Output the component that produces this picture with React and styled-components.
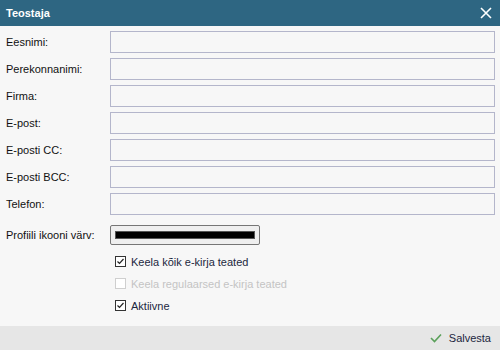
import React from 'react';
import styled, { createGlobalStyle } from 'styled-components';

const GlobalStyle = createGlobalStyle`
  html, body {
    margin: 0;
    padding: 0;
    background: #f7f7f7;
  }
  body {
    font-family: "Liberation Sans", Arial, sans-serif;
    font-size: 11px;
  }
`;

const Dialog = styled.div`
  width: 500px;
  height: 350px;
  display: flex;
  flex-direction: column;
  background: #f7f7f7;
  overflow: hidden;
`;

const Header = styled.div`
  height: 26px;
  flex: none;
  display: flex;
  align-items: center;
  justify-content: space-between;
  padding: 0 6px;
  background: #2e6682;
  color: #fff;
`;

const Title = styled.span`
  font-weight: 700;
  font-size: 11px;
`;

const Close = styled.button`
  border: 0;
  background: none;
  padding: 0;
  width: 16px;
  height: 16px;
  display: flex;
  align-items: center;
  justify-content: center;
  cursor: pointer;
`;

const Body = styled.div`
  flex: 1;
  padding: 5px 5px 0 6px;
`;

const Row = styled.div`
  display: grid;
  grid-template-columns: 104px 1fr;
  align-items: center;
  height: 22px;
  margin-bottom: 5px;
`;

const Label = styled.label`
  color: #111;
`;

const TextInput = styled.input`
  box-sizing: border-box;
  width: 385px;
  height: 22px;
  border: 1px solid #b4b6cb;
  background: #f7f7f7;
  font: inherit;
  padding: 0 4px;
  outline: none;
`;

const ColorRow = styled(Row)`
  margin-top: 10px;
  height: 20px;
`;

const ColorButton = styled.div`
  box-sizing: border-box;
  width: 150px;
  height: 20px;
  border: 1px solid #767676;
  border-radius: 2px;
  background: #efefef;
  padding: 5px 4px;
`;

const Swatch = styled.div`
  height: 100%;
  background: #000;
  border: 1px solid #555;
  box-sizing: border-box;
`;

const Checks = styled.div`
  display: flex;
  flex-direction: column;
  gap: 9px;
  padding: 5px 0 0 109px;
`;

const Check = styled.label`
  display: flex;
  align-items: center;
  gap: 5px;
  height: 13px;
  color: ${p => (p.disabled ? '#c4c4c4' : '#1c2740')};
`;

const Box = styled.span`
  box-sizing: border-box;
  width: 11px;
  height: 11px;
  border: 1px solid ${p => (p.disabled ? '#cfcfcf' : '#333')};
  background: #fff;
  display: flex;
  align-items: center;
  justify-content: center;
`;

const Footer = styled.div`
  height: 24px;
  flex: none;
  background: #e6e6e6;
  display: flex;
  align-items: center;
  justify-content: flex-end;
  padding-right: 9px;
`;

const SaveButton = styled.button`
  border: 0;
  background: none;
  font: inherit;
  color: #1c2740;
  display: flex;
  align-items: center;
  gap: 7px;
  padding: 0;
  cursor: pointer;
`;

const fields = ['Eesnimi:', 'Perekonnanimi:', 'Firma:', 'E-post:', 'E-posti CC:', 'E-posti BCC:', 'Telefon:'];

const checks = [
  { label: 'Keela kõik e-kirja teated', checked: true },
  { label: 'Keela regulaarsed e-kirja teated', disabled: true },
  { label: 'Aktiivne', checked: true },
];

export default function App() {
  return (
    <Dialog>
      <GlobalStyle />
      <Header>
        <Title>Teostaja</Title>
        <Close aria-label="Sulge">
          <svg width="12" height="12" viewBox="0 0 12 12">
            <path d="M1 1L11 11M11 1L1 11" stroke="#fff" strokeWidth="1.6" />
          </svg>
        </Close>
      </Header>
      <Body>
        {fields.map(f => (
          <Row key={f}>
            <Label>{f}</Label>
            <TextInput />
          </Row>
        ))}
        <ColorRow>
          <Label>Profiili ikooni värv:</Label>
          <ColorButton><Swatch /></ColorButton>
        </ColorRow>
        <Checks>
          {checks.map(c => (
            <Check key={c.label} disabled={c.disabled}>
              <Box disabled={c.disabled}>
                {c.checked && (
                  <svg width="9" height="9" viewBox="0 0 9 9">
                    <path d="M1.5 4.5L3.5 6.5L7.5 2" stroke="#222" strokeWidth="1.2" fill="none" />
                  </svg>
                )}
              </Box>
              {c.label}
            </Check>
          ))}
        </Checks>
      </Body>
      <Footer>
        <SaveButton>
          <svg width="12" height="10" viewBox="0 0 12 10">
            <path d="M1 5L4.5 8.5L11 1.5" stroke="#5aa05a" strokeWidth="1.6" fill="none" />
          </svg>
          Salvesta
        </SaveButton>
      </Footer>
    </Dialog>
  );
}
